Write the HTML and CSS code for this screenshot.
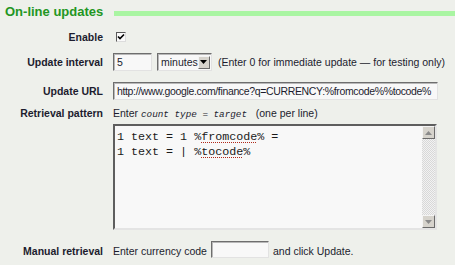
FILE: index.html
```html
<!DOCTYPE html>
<html lang="en">
<head>
    <meta charset="UTF-8">
    <title>On-line updates</title>
    <link rel="stylesheet" href="styles.css">
</head>
<body>
    <div class="panel">
        <div class="title">
            <h2>On-line updates</h2>
            <span class="rule"></span>
        </div>

        <div class="row row-enable">
            <span class="label">Enable</span>
            <div class="field">
                <span class="checkbox">
                    <svg width="8" height="8" viewBox="0 0 8 8"><path d="M1 3.5 L3 5.5 L7 1.5" fill="none" stroke="#000" stroke-width="1.6"/></svg>
                </span>
            </div>
        </div>

        <div class="row row-interval">
            <span class="label">Update interval</span>
            <div class="field">
                <span class="input input-interval">5</span>
                <span class="select">
                    <span class="select-text">minutes</span>
                    <span class="select-btn"><svg width="7" height="4" viewBox="0 0 7 4"><path d="M0 0 H7 L3.5 4 Z" fill="#000"/></svg></span>
                </span>
                <span class="note">(Enter 0 for immediate update &mdash; for testing only)</span>
            </div>
        </div>

        <div class="row row-url">
            <span class="label">Update URL</span>
            <div class="field">
                <span class="input input-url">http://www.google.com/finance?q=CURRENCY:%fromcode%%tocode%</span>
            </div>
        </div>

        <div class="row row-pattern">
            <span class="label">Retrieval pattern</span>
            <div class="field field-col">
                <div class="hint">Enter <code>count type = target</code>&nbsp;&nbsp; (one per line)</div>
                <div class="textarea">
                    <div class="textarea-text">
                        <div class="line">1 text = 1 %<span class="spell">fromcode</span>% =</div>
                        <div class="line">1 text = | %<span class="spell">tocode</span>%</div>
                    </div>
                    <div class="scrollbar">
                        <span class="scroll-btn"><svg width="7" height="4" viewBox="0 0 7 4"><path d="M3.5 0 L7 4 H0 Z" fill="#8a8a8a"/></svg></span>
                        <span class="scroll-track"></span>
                        <span class="scroll-btn"><svg width="7" height="4" viewBox="0 0 7 4"><path d="M0 0 H7 L3.5 4 Z" fill="#8a8a8a"/></svg></span>
                    </div>
                </div>
            </div>
        </div>

        <div class="row row-manual">
            <span class="label">Manual retrieval</span>
            <div class="field">
                <span class="text">Enter currency code</span>
                <span class="input input-code"></span>
                <span class="text">and click Update.</span>
            </div>
        </div>
    </div>
</body>
</html>
```

FILE: styles.css
```css
body {
    margin: 0;
    background-color: #eef0eb;
    font-family: "Liberation Sans", Arial, sans-serif;
    font-size: 10.5px;
    color: #1c1c2e;
}

.panel {
    width: 455px;
    height: 265px;
    overflow: hidden;
}

.title {
    display: flex;
    align-items: center;
    height: 18px;
    padding: 3px 0 0 5px;
}

.title h2 {
    margin: 0;
    font-size: 13px;
    font-weight: bold;
    color: #239623;
    line-height: 18px;
}

.rule {
    flex: 1;
    height: 5px;
    margin: 2px 0 0 11px;
    background-color: #a9f5a2;
}

.row {
    display: flex;
    align-items: center;
}

.label {
    width: 103px;
    margin-right: 10px;
    text-align: right;
    font-weight: bold;
    font-size: 10.5px;
    flex-shrink: 0;
}

.field {
    display: flex;
    align-items: center;
}

.field-col {
    flex-direction: column;
    align-items: flex-start;
}

.row-enable {
    height: 18px;
    margin-top: 7px;
}

.checkbox {
    display: flex;
    align-items: center;
    justify-content: center;
    width: 8px;
    height: 8px;
    margin-left: 3px;
    background-color: #fafafa;
    border: 1px solid;
    border-color: #5a5a5a #dcdcdc #dcdcdc #5a5a5a;
}

.input {
    box-sizing: border-box;
    display: flex;
    align-items: center;
    padding: 0 3px;
    background-color: #f8f8f8;
    border: 1px solid;
    border-color: #6e6e6e #e2e2e2 #e2e2e2 #6e6e6e;
    box-shadow: inset 1px 1px 0 #b8b8b8;
    white-space: nowrap;
    overflow: hidden;
}

.row-interval {
    height: 18px;
    margin-top: 7px;
}

.input-interval {
    width: 39px;
    height: 18px;
}

.select {
    box-sizing: border-box;
    display: flex;
    align-items: center;
    width: 55px;
    height: 18px;
    margin-left: 5px;
    padding: 0 1px 0 3px;
    background-color: #f8f8f8;
    border: 1px solid;
    border-color: #6e6e6e #e2e2e2 #e2e2e2 #6e6e6e;
    box-shadow: inset 1px 1px 0 #b8b8b8;
}

.select-text {
    flex: 1;
}

.select-btn {
    box-sizing: border-box;
    display: flex;
    align-items: center;
    justify-content: center;
    width: 13px;
    height: 13px;
    background-color: #d6d3cc;
    border: 1px solid;
    border-color: #f4f4f4 #6a6a6a #6a6a6a #f4f4f4;
}

.note {
    margin-left: 6px;
    white-space: nowrap;
}

.row-url {
    height: 18px;
    margin-top: 11px;
}

.input-url {
    width: 325px;
    height: 18px;
    font-size: 10.5px;
    letter-spacing: -0.35px;
}

.row-pattern {
    align-items: flex-start;
    margin-top: 6px;
}

.row-pattern .label {
    line-height: 14px;
}

.hint {
    line-height: 14px;
    white-space: nowrap;
}

.hint code {
    font-family: "Liberation Mono", "Courier New", monospace;
    font-style: italic;
    font-size: 9.3px;
}

.textarea {
    box-sizing: border-box;
    display: flex;
    width: 324px;
    height: 106px;
    margin-top: 2px;
    background-color: #f8f8f8;
    border: 2px solid;
    border-color: #5e5e5e #e4e4e4 #e4e4e4 #5e5e5e;
}

.textarea-text {
    flex: 1;
    padding: 4px 2px;
    font-family: "Liberation Mono", "Courier New", monospace;
    font-size: 11.7px;
    line-height: 15px;
    color: #1a1a1a;
}

.line {
    white-space: pre;
}

.spell {
    text-decoration: underline dotted #b02a1a;
    text-underline-offset: 2px;
}

.scrollbar {
    display: flex;
    flex-direction: column;
    width: 13px;
}

.scroll-btn {
    box-sizing: border-box;
    display: flex;
    align-items: center;
    justify-content: center;
    height: 13px;
    background-color: #d6d3cc;
    border: 1px solid;
    border-color: #f4f4f4 #6a6a6a #6a6a6a #f4f4f4;
}

.scroll-track {
    flex: 1;
    background-color: #f0f0f0;
    background-image: repeating-conic-gradient(#d8d8d8 0 25%, #f2f2f2 0 50%);
    background-size: 2px 2px;
}

.row-manual {
    height: 17px;
    margin-top: 11px;
}

.row-manual .label {
    padding-top: 3px;
}

.text {
    white-space: nowrap;
    padding-top: 3px;
}

.input-code {
    width: 58px;
    height: 17px;
    margin: 0 4px;
}
```
